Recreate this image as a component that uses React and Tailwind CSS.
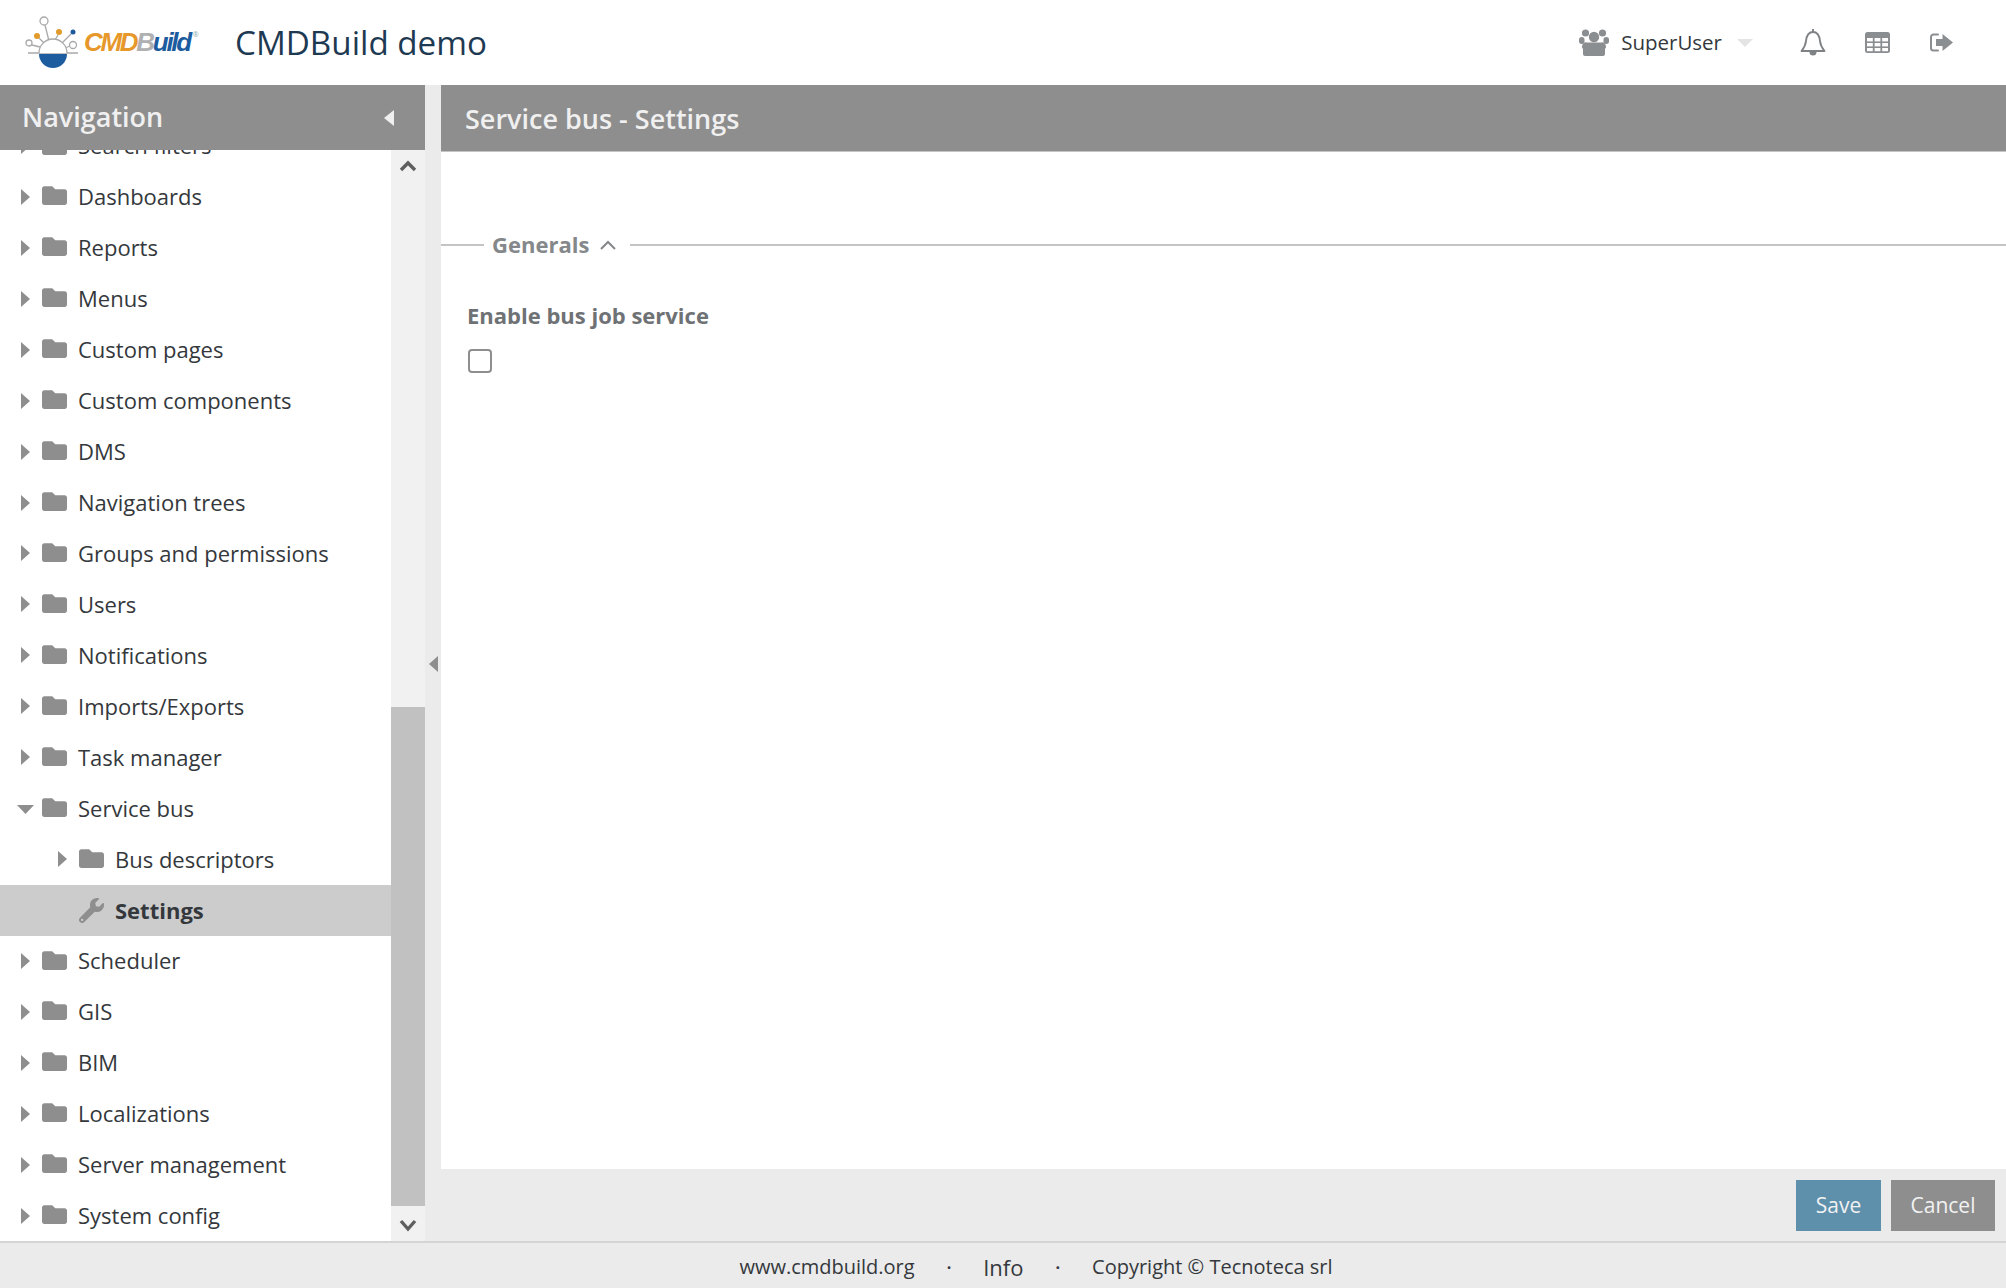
import React from "react";
import { FaFolder, FaWrench } from "react-icons/fa";

const font = { fontFamily: '"Open Sans", sans-serif' };

const before = [
  "Search filters",
  "Dashboards",
  "Reports",
  "Menus",
  "Custom pages",
  "Custom components",
  "DMS",
  "Navigation trees",
  "Groups and permissions",
  "Users",
  "Notifications",
  "Imports/Exports",
  "Task manager",
];

const after = ["Scheduler", "GIS", "BIM", "Localizations", "Server management", "System config"];

function Caret({ open }) {
  if (open) {
    return (
      <svg width="17" height="9" viewBox="0 0 17 9" className="absolute left-[17px] top-[22px]">
        <polygon points="0,0 17,0 8.5,9" fill="#8e8e8e" />
      </svg>
    );
  }
  return (
    <svg width="9" height="16" viewBox="0 0 9 16" className="shrink-0">
      <polygon points="0,0 9,8 0,16" fill="#8e8e8e" />
    </svg>
  );
}

function TreeRow({ label, open, depth = 0 }) {
  return (
    <div
      className={`relative flex h-[50.95px] shrink-0 items-center text-[22px] text-[#34383c] ${
        depth ? "pl-[58px]" : "pl-[21px]"
      }`}
    >
      {open ? <Caret open /> : <Caret />}
      <FaFolder className={`absolute top-[12px] text-[25px] text-[#8e8e8e] ${depth ? "left-[79px]" : "left-[42px]"}`} />
      <span className={`absolute ${depth ? "left-[115px]" : "left-[78px]"}`}>{label}</span>
    </div>
  );
}

function Logo() {
  return (
    <div className="flex w-[210px] shrink-0 items-center">
      <svg width="54" height="54" viewBox="0 0 54 54" fill="none">
        <g stroke="#a9a9a9" strokeWidth="1.3">
          <path d="M20 9 L24 25 M7 29 L15 31 M14 22 L19 27 M33 19 L30 24 M46 18 L37 27 M45 30 L40 32" />
          <circle cx="19" cy="5" r="4" fill="#fff" />
          <circle cx="4" cy="27" r="3" fill="#fff" />
          <circle cx="48" cy="29" r="3.5" fill="#fff" />
          <path d="M3 37 H53" />
          <path d="M14 37 A14 14 0 0 1 42 37" fill="#fff" />
        </g>
        <circle cx="12" cy="20" r="3" fill="#e29a2c" />
        <circle cx="34" cy="16" r="3" fill="#e29a2c" />
        <circle cx="48" cy="16" r="2.5" fill="#1c5a9c" />
        <path d="M14 38 H42 A14 14 0 0 1 14 38 Z" fill="#1d5c9e" />
      </svg>
      <span
        className="ml-[5px] text-[26px] font-bold italic tracking-[-2.3px]"
        style={{ fontFamily: '"Liberation Sans", sans-serif' }}
      >
        <span className="text-[#e6982a]">CMD</span>
        <span className="text-[#aeb0b2]">B</span>
        <span className="text-[#1d5c9e]">uild</span>
      </span>
      <span className="mb-[14px] ml-[3px] text-[7px] text-[#8aa]">®</span>
    </div>
  );
}

function UsersIcon() {
  return (
    <svg width="30" height="27" viewBox="0 0 30 27" fill="#8b8e91">
      <circle cx="6.5" cy="4" r="3.6" />
      <circle cx="23.5" cy="4" r="3.6" />
      <circle cx="15" cy="8" r="5.2" />
      <rect x="0" y="8" width="5.5" height="7" rx="2.7" />
      <rect x="24.5" y="8" width="5.5" height="7" rx="2.7" />
      <path d="M4 20 a4 4 0 0 1 4-6.5 h14 a4 4 0 0 1 4 6.5 v5 a2 2 0 0 1-2 2 h-18 a2 2 0 0 1-2-2z" />
    </svg>
  );
}

function BellIcon() {
  return (
    <svg width="26" height="27" viewBox="0 0 26 27" fill="none" stroke="#7f8285" strokeWidth="1.9">
      <path d="M13 3 C7.5 3 6.5 7.5 6 12 C5.6 16 4 19 1.5 22 H24.5 C22 19 20.4 16 20 12 C19.5 7.5 18.5 3 13 3 Z" strokeLinejoin="round" />
      <path d="M13 0.5 V3" strokeLinecap="round" />
      <path d="M9.5 23 a3.5 3.5 0 0 0 7 0 z" fill="#7f8285" stroke="none" />
    </svg>
  );
}

function TableIcon() {
  return (
    <svg width="25" height="21" viewBox="0 0 25 21">
      <rect width="25" height="21" rx="2.5" fill="#8b8e91" />
      <g fill="#fff">
        <rect x="2" y="6" width="5.8" height="3.4" />
        <rect x="9.6" y="6" width="5.8" height="3.4" />
        <rect x="17.2" y="6" width="5.8" height="3.4" />
        <rect x="2" y="11" width="5.8" height="3.4" />
        <rect x="9.6" y="11" width="5.8" height="3.4" />
        <rect x="17.2" y="11" width="5.8" height="3.4" />
        <rect x="2" y="16" width="5.8" height="3.2" />
        <rect x="9.6" y="16" width="5.8" height="3.2" />
        <rect x="17.2" y="16" width="5.8" height="3.2" />
      </g>
    </svg>
  );
}

function App() {
  return (
    <div className="flex h-screen w-full flex-col overflow-hidden bg-[#ebebeb]" style={font}>
      {/* top bar */}
      <header className="flex h-[85px] shrink-0 items-center bg-white pl-[25px]">
        <Logo />
        <h1 className="text-[33.2px] leading-none font-normal text-[#1e3a52]">CMDBuild demo</h1>
        <div className="ml-auto flex items-center">
          <UsersIcon />
          <span className="ml-[12px] text-[20.5px] text-[#34383c]">SuperUser</span>
          <svg width="16" height="8" viewBox="0 0 16 8" className="ml-[15px]">
            <polygon points="0,0 16,0 8,8" fill="#e4e4e4" />
          </svg>
          <div className="ml-[47px]">
            <BellIcon />
          </div>
          <div className="ml-[39px]">
            <TableIcon />
          </div>
          <svg width="24" height="21" viewBox="0 0 24 21" className="mr-[53px] ml-[39px]">
            <path d="M9 2.5H4.5A2.5 2.5 0 0 0 2 5v11a2.5 2.5 0 0 0 2.5 2.5H9" fill="none" stroke="#8b8e91" strokeWidth="2" strokeLinecap="round" />
            <path d="M7 7h6.5V2L24 10.5 13.5 19v-5H7z" fill="#8b8e91" />
          </svg>
        </div>
      </header>

      <div className="flex min-h-0 flex-1">
        {/* navigation */}
        <aside className="flex w-[425px] shrink-0 flex-col bg-white">
          <div className="relative z-10 flex h-[65px] shrink-0 items-center justify-between bg-[#8e8e8e] pr-[31px] pl-[22px]">
            <span className="text-[27px] font-semibold text-[#f0f0f0]">Navigation</span>
            <svg width="10" height="16" viewBox="0 0 10 16">
              <polygon points="10,0 10,16 0,8" fill="#f0f0f0" />
            </svg>
          </div>
          <div className="flex min-h-0 flex-1">
            <div className="flex min-w-0 flex-1 flex-col overflow-hidden">
              <div className="-mt-[29.5px] flex flex-col">
                {before.map((name) => (
                  <TreeRow key={name} label={name} />
                ))}
                <TreeRow label="Service bus" open />
                <TreeRow label="Bus descriptors" depth={1} />
                <div className="relative flex h-[50.95px] shrink-0 items-center bg-[#cccccc] text-[22px] font-bold text-[#34383c]">
                  <FaWrench className="absolute left-[79px] top-[13px] text-[25px] text-[#8e8e8e]" />
                  <span className="absolute left-[115px]">Settings</span>
                </div>
                {after.map((name) => (
                  <TreeRow key={name} label={name} />
                ))}
              </div>
            </div>
            <div className="flex w-[34px] shrink-0 flex-col bg-[#f1f1f1]">
              <div className="flex h-[32px] items-center justify-center">
                <svg width="18" height="12" viewBox="0 0 18 12" fill="none" className="-ml-[1px]">
                  <path d="M2 10 L9 3 L16 10" stroke="#5f5f5f" strokeWidth="3.4" />
                </svg>
              </div>
              <div className="flex-1" />
              <div className="h-[499px] bg-[#c1c1c1]" />
              <div className="flex h-[35px] items-center justify-center pt-[4px]">
                <svg width="18" height="14" viewBox="0 0 18 14" fill="none" className="-ml-[1px]">
                  <path d="M2 2 L9 10 L16 2" stroke="#5f5f5f" strokeWidth="3.4" />
                </svg>
              </div>
            </div>
          </div>
        </aside>

        {/* splitter */}
        <div className="flex w-[16px] shrink-0 items-center pl-[4px]">
          <svg width="9" height="16" viewBox="0 0 9 16" className="mt-[2px]">
            <polygon points="9,0 9,16 0,8" fill="#8e8e8e" />
          </svg>
        </div>

        {/* main panel */}
        <main className="flex min-w-0 flex-1 flex-col">
          <div className="flex h-[67px] shrink-0 items-center border-b border-[#c4c4c4] bg-[#8e8e8e] pt-[2px] pl-[24px]">
            <span className="text-[27px] font-semibold text-[#f0f0f0]">Service bus - Settings</span>
          </div>
          <div className="flex min-h-0 flex-1 flex-col bg-white">
            <div className="mt-[76px] flex items-center">
              <div className="h-[2px] w-[43px] bg-[#c4c4c4]" />
              <span className="ml-[8px] text-[22px] font-bold text-[#85888a]">Generals</span>
              <svg width="16" height="10" viewBox="0 0 16 10" fill="none" className="ml-[11px]">
                <path d="M1 9 L8 2 L15 9" stroke="#85888a" strokeWidth="2" />
              </svg>
              <div className="ml-[14px] h-[2px] flex-1 bg-[#c4c4c4]" />
            </div>
            <label className="mt-[38px] ml-[26px] text-[22px] font-bold text-[#6f7275]">Enable bus job service</label>
            <div className="mt-[17px] ml-[27px] h-[24px] w-[24px] rounded-[4px] border-2 border-[#8e8e8e] bg-white" />
          </div>
          <div className="flex h-[72px] shrink-0 items-start justify-end gap-[10px] pt-[11px] pr-[11px]">
            <button className="h-[51px] w-[85px] bg-[#5e8fab] text-[21px] text-[#f2f2f2]">Save</button>
            <button className="h-[51px] w-[104px] bg-[#8e8e8e] text-[21px] text-[#f2f2f2]">Cancel</button>
          </div>
        </main>
      </div>

      {/* footer */}
      <footer className="flex h-[47px] shrink-0 items-center justify-center border-t-2 border-[#d4d4d4] pt-[3px] pl-[66px] text-[20px] text-[#34383c]">
        <span>www.cmdbuild.org</span>
        <span className="mx-[32px] text-[16px] font-bold">·</span>
        <span className="text-[22px]">Info</span>
        <span className="mx-[32px] text-[16px] font-bold">·</span>
        <span>Copyright © Tecnoteca srl</span>
      </footer>
    </div>
  );
}

export default App;
